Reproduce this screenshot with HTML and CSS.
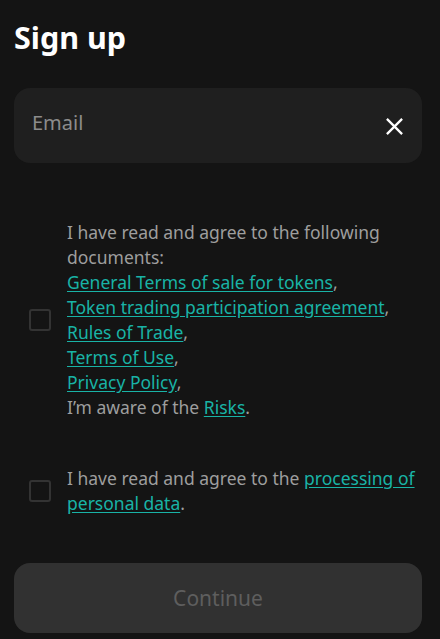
FILE: index.html
```html
<!DOCTYPE html>
<html>
<head>
<meta charset="utf-8">
<link rel="stylesheet" href="styles.css">
</head>
<body>
<main class="page">
  <h1 class="title">Sign up</h1>
  <div class="field">
    <span class="placeholder">Email</span>
    <svg class="clear" width="19" height="19" viewBox="0 0 20 20"><path d="M2 2 L18 18 M18 2 L2 18" stroke="#fff" stroke-width="2.4" stroke-linecap="butt" fill="none"/></svg>
  </div>
  <div class="agree first">
    <span class="box"></span>
    <p class="text">I have read and agree to the following documents:<br>
      <a href="#">General Terms of sale for tokens</a>,<br>
      <a href="#">Token trading participation agreement</a>,<br>
      <a href="#">Rules of Trade</a>,<br>
      <a href="#">Terms of Use</a>,<br>
      <a href="#">Privacy Policy</a>,<br>
      I’m aware of the <a href="#">Risks</a>.</p>
  </div>
  <div class="agree second">
    <span class="box"></span>
    <p class="text">I have read and agree to the <a href="#">processing of personal data</a>.</p>
  </div>
  <button class="continue">Continue</button>
</main>
</body>
</html>
```
FILE: styles.css
```css
html, body {
  margin: 0;
  padding: 0;
  background: #141414;
}
body {
  font-family: "Noto Sans", "Open Sans", sans-serif;
}
.page {
  padding: 14px 18px 0 14px;
  display: flex;
  flex-direction: column;
}
.title {
  margin: 0;
  font-size: 30.5px;
  font-weight: 700;
  color: #ffffff;
  line-height: 46px;
}
.field {
  margin-top: 28px;
  height: 75px;
  background: #1f1f1f;
  border-radius: 16px;
  display: flex;
  align-items: center;
  justify-content: space-between;
  padding: 0 18px 0 18px;
  box-sizing: border-box;
}
.placeholder {
  font-size: 20px;
  color: #8c8c8c;
  margin-top: -6px;
}
.clear {
  display: block;
  width: 19px;
  height: 19px;
  margin-top: 2px;
}
.agree {
  display: flex;
  align-items: center;
  padding-left: 15px;
}
.agree.first { margin-top: 57px; }
.agree.second { margin-top: 46px; }
.box {
  flex: none;
  width: 22px;
  height: 22px;
  box-sizing: border-box;
  border: 2px solid #333333;
  border-radius: 3px;
  margin-right: 16px;
}
.text {
  margin: 0;
  font-size: 17.5px;
  line-height: 25px;
  color: #9e9e9e;
}
.text a {
  color: #19b3a6;
  text-decoration: underline;
  text-underline-offset: 2px;
}
.continue {
  margin-top: 47px;
  height: 70px;
  border: none;
  border-radius: 16px;
  background: #313131;
  color: #5e5e5e;
  font-family: "Noto Sans", "Open Sans", sans-serif;
  font-size: 21px;
}
```
